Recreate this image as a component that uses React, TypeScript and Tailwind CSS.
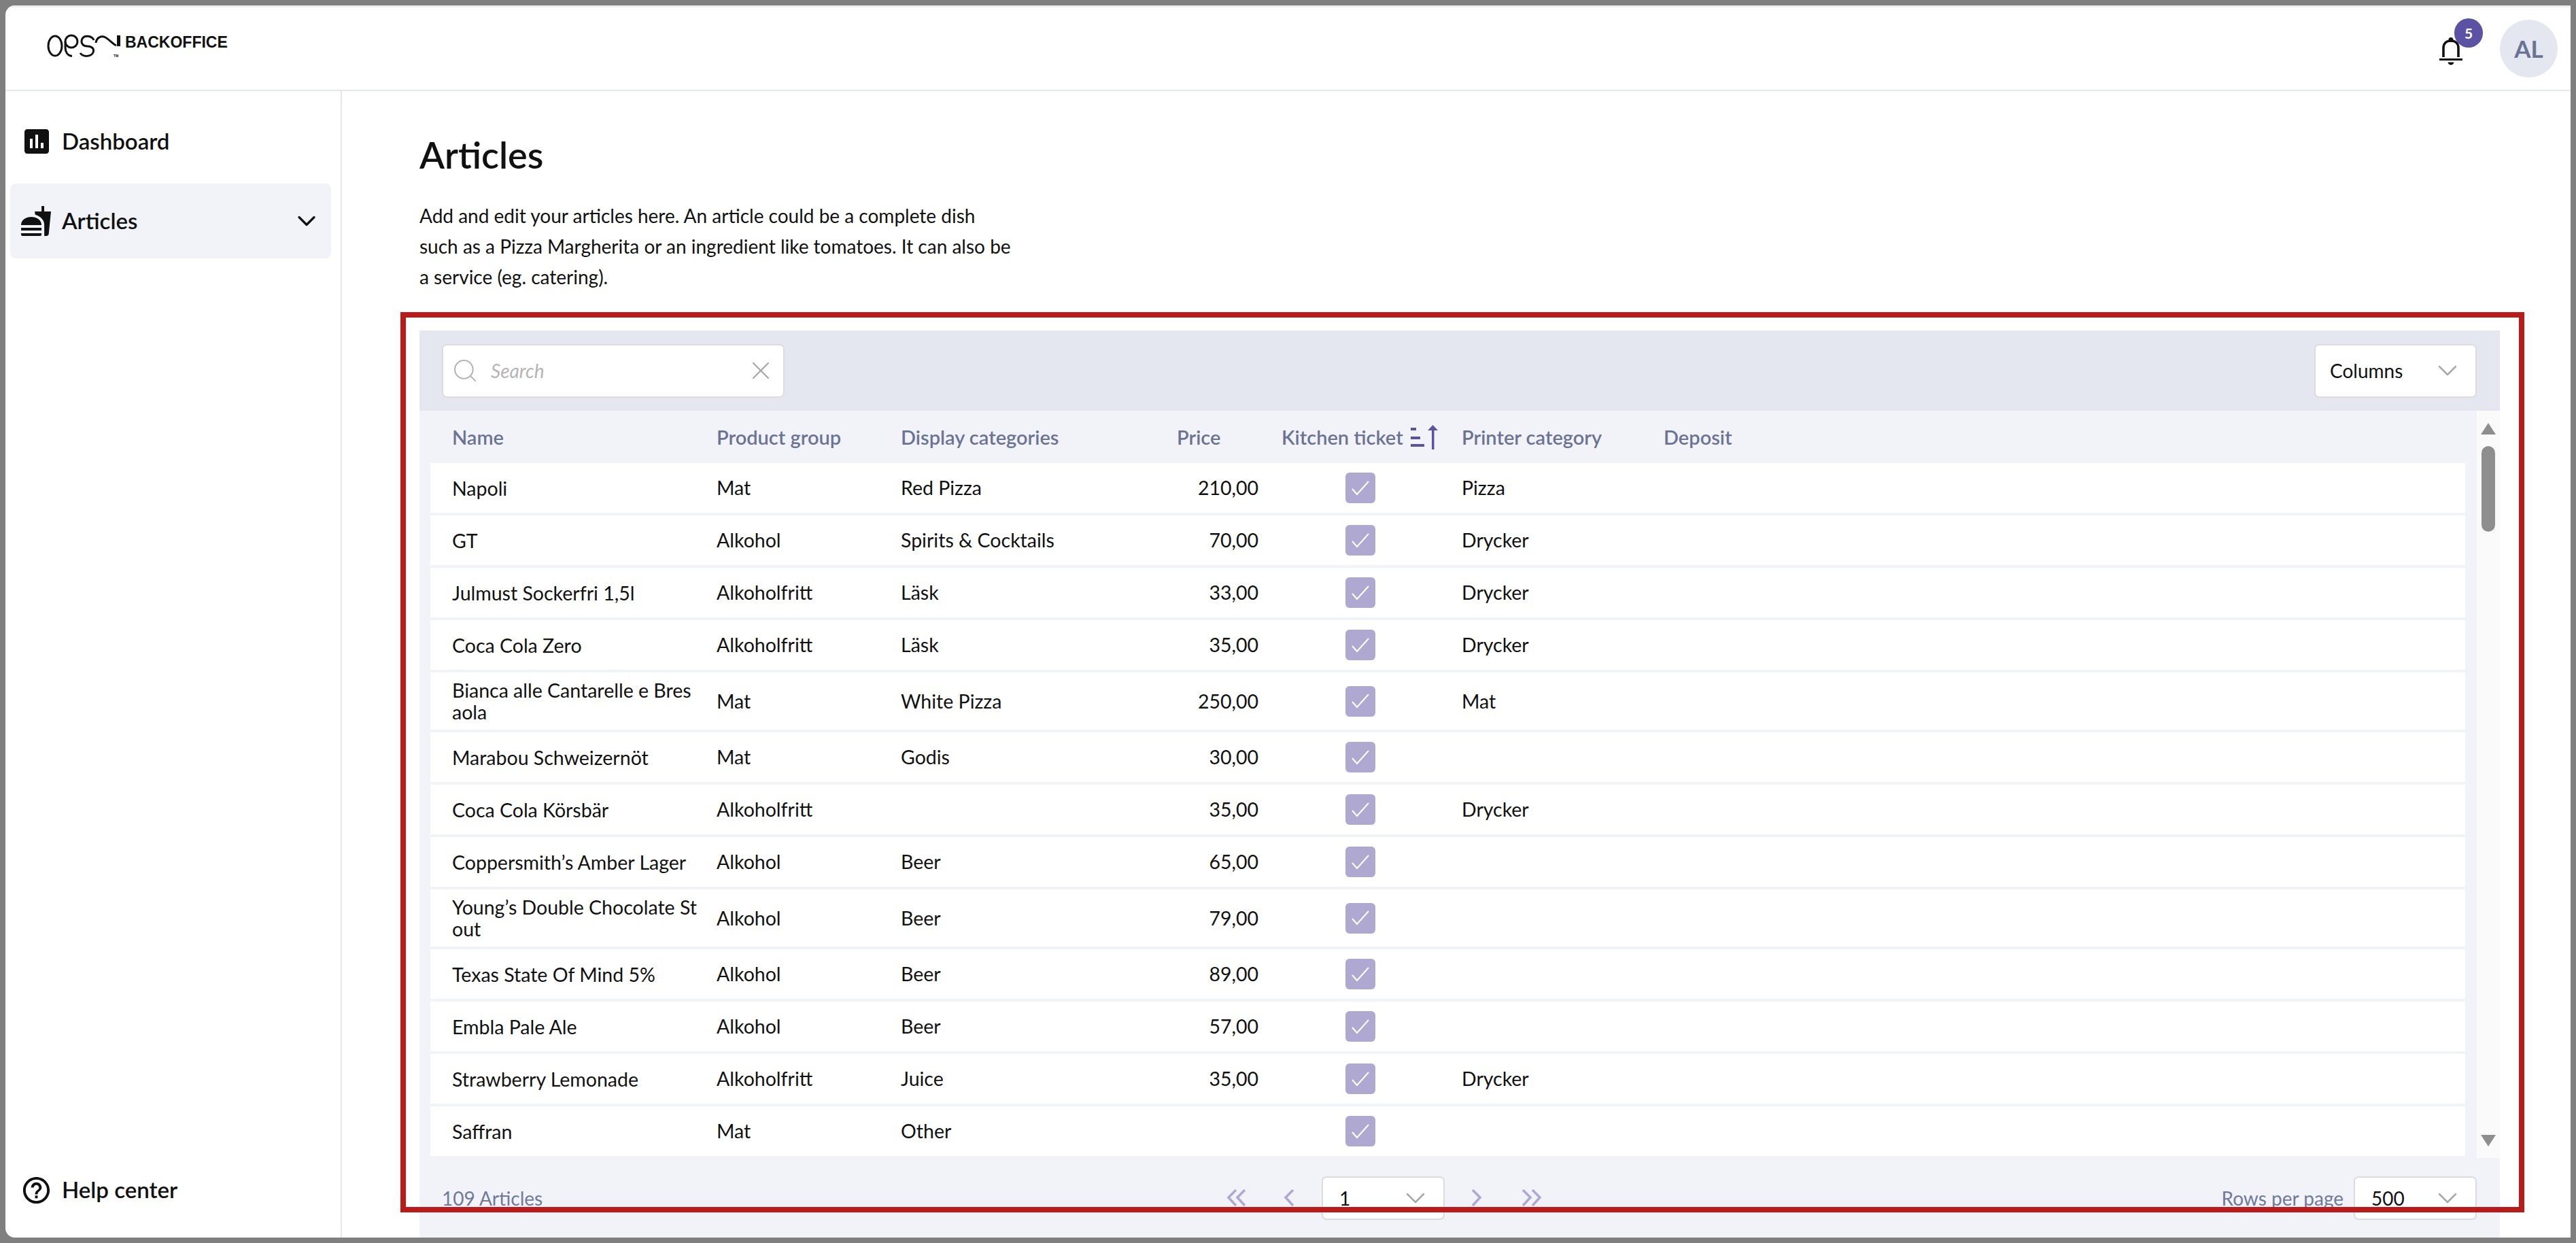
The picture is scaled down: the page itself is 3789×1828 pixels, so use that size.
import { ChevronDown, Search, X } from "lucide-react";
import { MdAssessment, MdFastfood, MdHelpOutline } from "react-icons/md";

type Article = {
    name: string;
    group: string;
    display?: string;
    price?: string;
    printer?: string;
    tall?: boolean;
};

const articles: Article[] = [
    { name: "Napoli", group: "Mat", display: "Red Pizza", price: "210,00", printer: "Pizza" },
    { name: "GT", group: "Alkohol", display: "Spirits & Cocktails", price: "70,00", printer: "Drycker" },
    { name: "Julmust Sockerfri 1,5l", group: "Alkoholfritt", display: "Läsk", price: "33,00", printer: "Drycker" },
    { name: "Coca Cola Zero", group: "Alkoholfritt", display: "Läsk", price: "35,00", printer: "Drycker" },
    { name: "Bianca alle Cantarelle e Bresaola", group: "Mat", display: "White Pizza", price: "250,00", printer: "Mat", tall: true },
    { name: "Marabou Schweizernöt", group: "Mat", display: "Godis", price: "30,00" },
    { name: "Coca Cola Körsbär", group: "Alkoholfritt", price: "35,00", printer: "Drycker" },
    { name: "Coppersmith’s Amber Lager", group: "Alkohol", display: "Beer", price: "65,00" },
    { name: "Young’s Double Chocolate Stout", group: "Alkohol", display: "Beer", price: "79,00", tall: true },
    { name: "Texas State Of Mind 5%", group: "Alkohol", display: "Beer", price: "89,00" },
    { name: "Embla Pale Ale", group: "Alkohol", display: "Beer", price: "57,00" },
    { name: "Strawberry Lemonade", group: "Alkoholfritt", display: "Juice", price: "35,00", printer: "Drycker" },
    { name: "Saffran", group: "Mat", display: "Other" },
];

const gridCols = "grid grid-cols-[421px_271px_406px_120px_299px_297px_1fr]";

const Logo = () => (
    <svg width="130" height="50" viewBox="0 0 130 50" fill="none" stroke="#111" strokeWidth="3">
        <ellipse cx="19" cy="23.500" rx="10" ry="14.500" />
        <circle cx="43" cy="17" r="9" />
        <path d="M34 17v8c0 8 4 13 10 13.500" />
        <path d="M76 15c-3-7-15-8-17.500-1-2 6 2 10 8 10 7 0 10.500 4 8.500 9-3 7-15 7-19 1" />
        <path d="M79 19c1-8 8-11 14-8 7 4 10 9 16 12" />
        <path d="M112.500 8v16" strokeWidth="5" />
        <text x="105" y="40" fontSize="5" fontWeight="700" stroke="none" fill="#111" fontFamily="'Liberation Sans',sans-serif">TM</text>
    </svg>
);

const Bell = () => (
    <svg width="34" height="41" viewBox="0 0 34 41" fill="none">
        <path d="M6 29V15.500C6 9 10.500 5 17 5s11 4 11 10.500V29" stroke="#111" strokeWidth="3.600" />
        <circle cx="17" cy="3.500" r="3.500" fill="#111" />
        <path d="M0 31h34v3H0z" fill="#111" />
        <path d="M12.500 36.500h9c-.5 2.500-2.300 4-4.500 4s-4-1.500-4.500-4z" fill="#111" />
    </svg>
);

const SortIcon = () => (
    <svg width="40" height="36" viewBox="0 0 40 36" fill="#5c52a3" className="ml-[11px] shrink-0">
        <path d="M0 4h8v4H0zM0 17h14v4H0zM0 28h20v4H0z" />
        <path d="M25 8l7.500-8L40 8h-5.500v28H31V8z" />
    </svg>
);

const Pager = ({ dir, double }: { dir: "left" | "right"; double?: boolean }) => {
    const one = dir === "left" ? "M14 1L3 12l11 12" : "M2 1l11 11L2 24";
    const two = dir === "left" ? "M27 1L16 12l11 12" : "M16 1l11 11-11 12";
    return (
        <svg width={double ? 29 : 16} height="25" viewBox={double ? "0 0 29 25" : "0 0 16 25"} fill="none" stroke="#b0a8d2" strokeWidth="3.600">
            <path d={one} />
            {double && <path d={two} />}
        </svg>
    );
};

const Select = ({ value, className }: { value: string; className: string }) => (
    <div className={`flex items-center justify-between bg-white border-2 border-[#dcdcdc] rounded-[7px] ${className}`}>
        <span>{value}</span>
        <ChevronDown size={48} strokeWidth={1.25} className="text-[#a8a8a8]" />
    </div>
);

const Row = ({ article }: { article: Article }) => (
    <div className={`${gridCols} items-center bg-white border-b-4 border-[#f2f3f8] ${article.tall ? "h-[88px]" : "h-[77px]"}`}>
        <div className="pl-[32px] pr-[28px] leading-[32px] break-all">{article.name}</div>
        <div>{article.group}</div>
        <div>{article.display}</div>
        <div className="text-right">{article.price}</div>
        <div className="flex justify-center">
            <div className="flex items-center justify-center w-[44px] h-[45px] rounded-[6px] bg-[#afa8d1]">
                <svg width="28" height="22" viewBox="0 0 28 22" fill="none" stroke="#fff" strokeWidth="2">
                    <path d="M2 12l7 8L26 1" />
                </svg>
            </div>
        </div>
        <div>{article.printer}</div>
        <div />
    </div>
);

const Scrollbar = () => (
    <div className="flex flex-col items-center w-[34px] h-full bg-[#fafafa]">
        <div className="mt-[18px] w-0 h-0 border-x-[11px] border-x-transparent border-b-[17px] border-b-[#8e8e8e]" />
        <div className="mt-[17px] w-[20px] h-[126px] rounded-[10px] bg-[#8e8e8e]" />
        <div className="mt-auto mb-[17px] w-0 h-0 border-x-[11px] border-x-transparent border-t-[17px] border-t-[#8e8e8e]" />
    </div>
);

const App = () => {
    return (
        <div className="relative w-[3789px] h-[1828px] p-2 bg-[#7f7f7f] overflow-hidden font-['Lato',sans-serif] text-[28px] text-[#111]">
            <div className="flex flex-col h-full bg-white rounded-l-[14px] overflow-hidden">
                {/* header */}
                <header className="flex items-center justify-between shrink-0 h-[126px] pl-[54px] pr-[19px] border-t-[3px] border-t-[#f0f0f0] border-b-2 border-b-[#e4e7f0]">
                    <div className="flex items-center -mt-[5px]">
                        <Logo />
                        <span className="-ml-[8px] -mt-[13px] font-['Liberation_Sans',sans-serif] font-bold text-[23px] leading-none">BACKOFFICE</span>
                    </div>
                    <div className="flex items-center">
                        <div className="relative mt-[8px] mr-[55px]">
                            <Bell />
                            <span className="absolute -top-[28px] left-[22px] flex items-center justify-center w-[42px] h-[43px] rounded-full bg-[#5c52a3] text-white text-[21px] font-bold">5</span>
                        </div>
                        <div className="flex items-center justify-center w-[85px] h-[85px] rounded-full bg-[#e4e7f0] text-[#6b7394] text-[35px] font-bold">AL</div>
                    </div>
                </header>

                <div className="flex flex-1 min-h-0">
                    {/* sidebar */}
                    <aside className="flex flex-col justify-between shrink-0 w-[495px] pt-[19px] pb-[15px] pl-[7px] pr-[14px] border-r-2 border-[#e4e7f0] text-[33px] font-semibold">
                        <div className="flex flex-col gap-[7px]">
                            <div className="flex items-center h-[110px] pl-[15px]">
                                <MdAssessment size={48} className="shrink-0" />
                                <span className="ml-[13px]">Dashboard</span>
                            </div>
                            <div className="flex items-center h-[110px] pl-[14px] pr-[14px] rounded-[8px] bg-[#f2f3f8]">
                                <MdFastfood size={48} className="shrink-0" />
                                <span className="ml-[14px]">Articles</span>
                                <ChevronDown size={44} strokeWidth={1.8} className="ml-auto" />
                            </div>
                        </div>
                        <div className="flex items-center h-[110px] pl-[15px]">
                            <MdHelpOutline size={47} className="shrink-0" />
                            <span className="ml-[14px]">Help center</span>
                        </div>
                    </aside>

                    {/* main */}
                    <main className="flex flex-col flex-1 min-w-0 pt-[63px] pl-[114px] pr-[104px]">
                        <h1 className="text-[54px] leading-[62px] font-semibold">Articles</h1>
                        <p className="mt-[36px] w-[880px] leading-[45px]">
                            Add and edit your articles here. An article could be a complete dish such as a Pizza Margherita or an ingredient like tomatoes. It can also be a service (eg. catering).
                        </p>

                        <section className="flex flex-col flex-1 min-h-0 mt-[56px] bg-[#f2f3f8]">
                            <div className="flex items-center justify-between shrink-0 h-[118px] pl-[33px] pr-[34px] bg-[#e4e7f0]">
                                <div className="flex items-center w-[504px] h-[79px] pl-[12px] pr-[11px] bg-white border-2 border-[#dcdcdc] rounded-[7px]">
                                    <Search size={40} strokeWidth={1.25} className="text-[#b5b5b5]" />
                                    <span className="ml-[18px] italic text-[#b5b5b5]">Search</span>
                                    <X size={44} strokeWidth={1.25} className="ml-auto text-[#a8a8a8]" />
                                </div>
                                <Select value="Columns" className="w-[239px] h-[79px] pl-[21px] pr-[17px]" />
                            </div>

                            <div className="flex h-[1099px] shrink-0">
                                <div className="flex-1 min-w-0 pl-[16px] pr-[17px] overflow-hidden text-[28.5px]">
                                    <div className={`${gridCols} items-center h-[77px] text-[29px] text-[#6b7394] font-semibold`}>
                                        <div className="pl-[32px]">Name</div>
                                        <div>Product group</div>
                                        <div>Display categories</div>
                                        <div>Price</div>
                                        <div className="flex items-center pl-[34px]">
                                            Kitchen ticket
                                            <SortIcon />
                                        </div>
                                        <div>Printer category</div>
                                        <div>Deposit</div>
                                    </div>
                                    {articles.map((article) => (
                                        <Row key={article.name} article={article} />
                                    ))}
                                </div>
                                <Scrollbar />
                            </div>

                            <div className="flex items-center flex-1 pl-[33px] pr-[34px] text-[#6f7a9b]">
                                <div className="w-[1154px]">109 Articles</div>
                                <div className="flex items-center text-[#111]">
                                    <Pager dir="left" double />
                                    <span className="ml-[55px]"><Pager dir="left" /></span>
                                    <Select value="1" className="ml-[40px] w-[181px] h-[64px] pl-[24px] pr-[17px]" />
                                    <span className="ml-[39px]"><Pager dir="right" /></span>
                                    <span className="ml-[58px]"><Pager dir="right" double /></span>
                                </div>
                                <div className="flex items-center ml-auto">
                                    <span>Rows per page</span>
                                    <Select value="500" className="ml-[15px] w-[181px] h-[64px] pl-[24px] pr-[17px] text-[#111]" />
                                </div>
                            </div>
                        </section>
                    </main>
                </div>
            </div>

            {/* red highlight drawn on the screenshot */}
            <div className="absolute left-[589px] top-[459px] w-[3124px] h-[1324px] border-8 border-[#ba1a1a]" />
        </div>
    );
};

export default App;
